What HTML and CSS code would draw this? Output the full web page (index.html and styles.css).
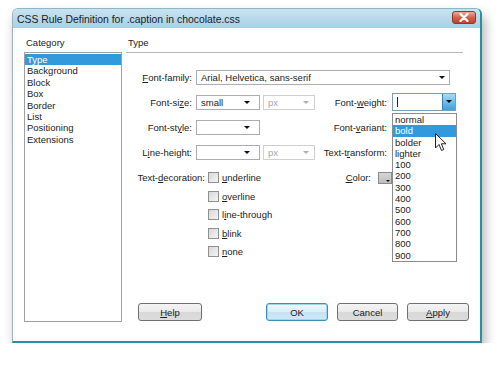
FILE: index.html
```html
<!DOCTYPE html>
<html>
<head>
<meta charset="utf-8">
<link rel="stylesheet" href="styles.css">
</head>
<body>
<div class="window">
  <div class="titlebar">
    <span class="title">CSS Rule Definition for .caption in chocolate.css</span>
    <span class="close"><svg width="12" height="9" viewBox="0 0 12 9"><path d="M2.5 1 L9.5 8 M9.5 1 L2.5 8" stroke="#fff" stroke-width="2.2" stroke-linecap="round"/></svg></span>
  </div>
  <div class="client">
    <div class="catcol">
      <div class="colhead">Category</div>
      <ul class="catlist">
        <li class="selected">Type</li>
        <li>Background</li>
        <li>Block</li>
        <li>Box</li>
        <li>Border</li>
        <li>List</li>
        <li>Positioning</li>
        <li>Extensions</li>
      </ul>
    </div>
    <div class="panel">
      <div class="panelhead">Type</div>
      <div class="form">
        <div class="lbl"><u>F</u>ont-family:</div>
        <div class="sel family">Arial, Helvetica, sans-serif<span class="arr"></span></div>

        <div class="lbl">Font-si<u>z</u>e:</div>
        <div class="sel small">small<span class="arr"></span></div>
        <div class="sel unit disabled">px<span class="arr"></span></div>
        <div class="lbl lbl2">Font-<u>w</u>eight:</div>
        <div class="weightcell">
          <div class="combo"><span class="caret"></span><span class="btn"><span class="arr dark"></span></span></div>
          <ul class="dropdown">
            <li>normal</li>
            <li class="selected">bold</li>
            <li>bolder</li>
            <li>lighter</li>
            <li>100</li>
            <li>200</li>
            <li>300</li>
            <li>400</li>
            <li>500</li>
            <li>600</li>
            <li>700</li>
            <li>800</li>
            <li>900</li>
          </ul>
          <svg class="pointer" width="12" height="19" viewBox="0 0 12 19"><path d="M0.5 0.5 L0.5 15 L4 11.5 L6.5 17.5 L8.8 16.5 L6.3 10.8 L11 10.8 Z" fill="#fff" stroke="#222" stroke-width="1" stroke-linejoin="round"/></svg>
        </div>

        <div class="lbl">Font-st<u>y</u>le:</div>
        <div class="sel small"><span class="arr"></span></div>
        <div></div>
        <div class="lbl lbl2">Font-<u>v</u>ariant:</div>
        <div></div>

        <div class="lbl">L<u>i</u>ne-height:</div>
        <div class="sel small"><span class="arr"></span></div>
        <div class="sel unit disabled">px<span class="arr"></span></div>
        <div class="lbl lbl2">Text-t<u>r</u>ansform:</div>
        <div></div>

        <div class="decor">
          <div class="declbl">Text-<u>d</u>ecoration:</div>
          <ul class="checks">
            <li><span class="cb"></span><u>u</u>nderline</li>
            <li><span class="cb"></span><u>o</u>verline</li>
            <li><span class="cb"></span>l<u>i</u>ne-through</li>
            <li><span class="cb"></span><u>b</u>link</li>
            <li><span class="cb"></span><u>n</u>one</li>
          </ul>
        </div>
        <div class="colorcell"><span><u>C</u>olor:</span><span class="swatch"><span class="arr tiny"></span></span></div>
      </div>
      <div class="buttons">
        <button class="btnx help"><u>H</u>elp</button>
        <div class="rightbtns">
          <button class="btnx ok">OK</button>
          <button class="btnx cancel">Cancel</button>
          <button class="btnx apply"><u>A</u>pply</button>
        </div>
      </div>
    </div>
  </div>
</div>
</body>
</html>
```

FILE: styles.css
```css
* { box-sizing: border-box; }
html, body { margin: 0; padding: 0; background: #fff; }
body {
  padding: 8px 0 0 12px;
  font-family: "Liberation Sans", Arial, sans-serif;
  font-size: 9.5px;
  color: #222;
}
ul { list-style: none; margin: 0; padding: 0; }
u { text-decoration: underline; text-underline-offset: 1px; }

.window {
  width: 470px;
  height: 335px;
  background: #fff;
  border: 1px solid #8fb5c8;
  border-right: 2px solid #2a8fa3;
  border-bottom: 2px solid #2a8fa3;
  border-left: 1px solid #9db3bd;
  border-radius: 6px 6px 0 0;
  box-shadow: 3px 7px 12px rgba(0,0,0,0.3);
  display: flex;
  flex-direction: column;
}

.titlebar {
  height: 19px;
  flex: none;
  background: linear-gradient(#c9e3f0, #a6d0e7);
  border-radius: 5px 5px 0 0;
  display: flex;
  align-items: center;
  padding: 0 4px 0 4px;
}
.title {
  font-size: 10.4px;
  color: #1a1a1a;
  flex: 1;
  padding-top: 1px;
}
.close {
  width: 24px;
  height: 13px;
  margin-top: -2px;
  border: 1px solid #8a3a2f;
  border-radius: 3px;
  background: linear-gradient(#eeaa9c, #d8604a 50%, #c2412b);
  display: flex;
  align-items: center;
  justify-content: center;
}

.client {
  flex: 1;
  display: flex;
  padding: 8px 0 0 11px;
  gap: 4px;
}

.catcol { width: 98px; display: flex; flex-direction: column; }
.colhead { height: 16px; line-height: 14px; padding-left: 2px; }
.catlist {
  height: 270px;
  border: 1px solid #a0a0a0;
  padding: 1px 0 0 0;
}
.catlist li { height: 11.4px; line-height: 11.4px; padding-left: 2px; }
.catlist li.selected { background: #3399dd; color: #fff; }

.panel { width: 343px; display: flex; flex-direction: column; height: 286px; }
.panelhead {
  height: 17px;
  line-height: 14px;
  padding-left: 2px;
  border-bottom: 1px solid #b8b8b8;
  margin-right: 6px;
}

.form {
  margin-top: 17px;
  display: grid;
  grid-template-columns: 70px 67px 52px 77px 64px;
  grid-auto-rows: 15px;
  row-gap: 10px;
  align-items: center;
}
.lbl { text-align: right; padding-right: 4px; white-space: nowrap; }
.lbl2 { padding-right: 5px; }

.sel {
  position: relative;
  height: 15px;
  border: 1px solid #abadb3;
  background: #fff;
  display: flex;
  align-items: center;
  padding-left: 4px;
}
.sel.family { grid-column: 2 / 6; width: 254px; }
.sel.small { width: 64px; }
.sel.unit { width: 52px; }
.sel.disabled { border-color: #d0d0d0; color: #a8a8a8; }

.arr {
  position: absolute;
  width: 0; height: 0;
  border-left: 3px solid transparent;
  border-right: 3px solid transparent;
  border-top: 3px solid #111;
  top: 5px;
  right: 9px;
}
.family .arr { right: 4px; }
.unit .arr { right: 5px; border-top-color: #b0b0b0; }

.weightcell { position: relative; height: 15px; }
.combo {
  position: absolute;
  left: 0; top: -2px;
  width: 64px; height: 18px;
  border: 1px solid #7a9cb4;
  background: #fff;
}
.caret {
  position: absolute;
  left: 4px; top: 3px;
  width: 1px; height: 10px;
  background: #222;
}
.combo .btn {
  position: absolute;
  right: 0; top: 0;
  width: 13px; height: 16px;
  background: linear-gradient(#a6dcf5, #3ba2d9);
  border-left: 1px solid #3c7fb1;
}
.arr.dark { top: 6px; right: 3px; border-top-color: #0a0a0a; border-left-width: 3.5px; border-right-width: 3.5px; border-top-width: 3.5px; }

.dropdown {
  position: absolute;
  left: 0; top: 18px;
  width: 65px;
  border: 1px solid #8c8c8c;
  background: #fff;
  z-index: 2;
}
.dropdown li { height: 11.3px; line-height: 11.3px; padding-left: 2px; }
.dropdown li.selected { background: #3399dd; color: #fff; }
.pointer { position: absolute; left: 43px; top: 38px; z-index: 3; }

.decor {
  grid-column: 1 / 4;
  align-self: start;
  display: flex;
  height: 15px;
}
.declbl { width: 82px; text-align: right; padding-right: 3px; line-height: 15px; white-space: nowrap; }
.checks li {
  height: 18.5px;
  display: flex;
  align-items: flex-start;
  line-height: 13px;
  padding-top: 1px;
}
.cb {
  width: 11px; height: 11px;
  border: 1px solid #8e8f8f;
  background: linear-gradient(135deg, #d8d8d8, #f4f4f4);
  margin-right: 3px;
  margin-top: 1px;
  flex: none;
}

.colorcell {
  display: flex;
  align-items: center;
  justify-content: flex-end;
  gap: 7px;
  align-self: start;
  height: 15px;
}
.swatch {
  position: relative;
  width: 14px; height: 12px;
  border: 1px solid #8a8a8a;
  background: linear-gradient(#d6d6d6, #bdbdbd);
}
.arr.tiny { top: 7px; right: 1px; border-left-width: 2px; border-right-width: 2px; border-top-width: 2px; }

.buttons {
  margin-top: auto;
  margin-bottom: 1px;
  display: flex;
  padding-left: 12px;
}
.rightbtns { margin-left: auto; display: flex; gap: 9px; }
.btnx {
  font: inherit;
  color: #222;
  height: 18px;
  border: 1px solid #707070;
  border-radius: 3px;
  background: linear-gradient(#f4f4f4 0%, #eaeaea 48%, #d8d8d8 52%, #dcdcdc 100%);
  padding: 0;
  margin: 0;
}
.help { width: 64px; }
.ok { width: 62px; border-color: #3c8fb4; background: linear-gradient(#eef7fc 0%, #dceef8 48%, #c6e3f3 52%, #cfe8f5 100%); box-shadow: inset 0 0 0 1px #9fd6ee; }
.cancel { width: 61px; }
.apply { width: 62px; }
```
